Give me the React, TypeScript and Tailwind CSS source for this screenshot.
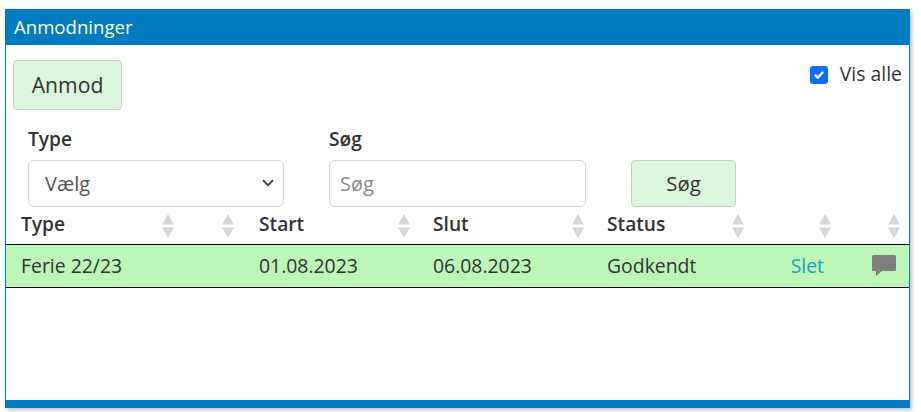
import { ChevronDown } from "lucide-react";

const headers = [
  { label: "Type", arrows: "right-[9px]" },
  { label: "", arrows: "right-[9px]" },
  { label: "Start", arrows: "right-[7px]" },
  { label: "Slut", arrows: "right-[7px]" },
  { label: "Status", arrows: "right-[8px]" },
  { label: "", arrows: "right-[9px]" },
  { label: "", arrows: "right-[9px]" },
];
const grid = "grid grid-cols-[178px_60px_174px_174px_161px_88px_69px]";

function SortArrows({ className }: { className: string }) {
  return (
    <svg className={`absolute top-[1px] ${className}`} width="14" height="24" viewBox="0 0 14 24" fill="#d6d6d6">
      <path d="M7 0 L13 10.5 L1 10.5 Z" />
      <path d="M1 13.5 L13 13.5 L7 24 Z" />
    </svg>
  );
}

export default function App() {
  return (
    <div className="h-[412px] w-[921px] bg-white pl-[5px] pt-[9px] font-['Open_Sans',sans-serif] text-[#333]">
      <div className="flex h-[399px] w-[905px] flex-col border-x border-b-[8px] border-x-[#007bc0] border-b-[#007bc0] shadow-[2px_2px_4px_rgba(0,0,0,0.25)]">
        <div className="flex h-[36px] items-center bg-[#007bc0] pl-2 text-[18.6px] text-white">Anmodninger</div>

        <div className="flex items-start justify-between pl-[7px] pr-[7px] pt-[15px]">
          <button className="h-[50px] w-[109px] rounded border border-[#ccc] bg-[#dcf8dc] text-[21.2px] text-[#333]">Anmod</button>
          <label className="flex items-center gap-[12px] text-[19.4px] leading-[27px]">
            <span className="mt-[3px] flex h-[18px] w-[18px] items-center justify-center rounded-[3px] bg-[#0d6efd]">
              <svg width="14" height="14" viewBox="0 0 20 20" fill="none" stroke="#fff" strokeWidth="3.4" strokeLinecap="round" strokeLinejoin="round">
                <path d="M5 10.5 L8.5 14 L15 6.5" />
              </svg>
            </span>
            Vis alle
          </label>
        </div>

        <div className="flex items-end pl-[22px] pt-[13px]">
          <div className="w-[256px]">
            <div className="mb-[6px] mt-[1px] text-[19.2px] font-semibold leading-[30px]">Type</div>
            <div className="relative flex h-[47px] items-center rounded-md border border-[#ced4da] pl-[16px] text-[20px] text-[#555]">
              Vælg
              <ChevronDown className="absolute right-[6px] top-[13px] text-[#444]" size={18} strokeWidth={2.4} />
            </div>
          </div>
          <div className="ml-[45px] w-[257px]">
            <div className="mb-[6px] mt-[1px] text-[19.2px] font-semibold leading-[30px]">Søg</div>
            <div className="flex h-[47px] items-center rounded-md border border-[#ced4da] pl-[10px] text-[20px] text-[#8a8a8a]">Søg</div>
          </div>
          <button className="ml-[45px] h-[47px] w-[105px] rounded border border-[#ccc] bg-[#dcf8dc] text-[20.4px] text-[#333]">Søg</button>
        </div>

        <div className={`${grid} mt-[2px] h-[36px] items-center border-b border-black`}>
          {headers.map((h, i) => (
            <div key={i} className="relative h-[28px] pl-[15px] text-[19.2px] font-semibold leading-[22px]">
              {h.label}
              <SortArrows className={h.arrows} />
            </div>
          ))}
        </div>

        <div className={`${grid} h-[43px] items-center border-b border-black bg-[#bbf7b7] text-[19.4px]`}>
          <div className="pl-[15px]">Ferie 22/23</div>
          <div />
          <div className="pl-[15px]">01.08.2023</div>
          <div className="pl-[15px]">06.08.2023</div>
          <div className="pl-[15px]">Godkendt</div>
          <div className="pr-[17px] text-right text-[#17a2b8]">Slet</div>
          <div className="flex justify-end pr-[14px]">
            <svg width="24" height="22" viewBox="0 0 24 22" fill="#7f7f7f">
              <path d="M1.5 0 H22.5 A1.5 1.5 0 0 1 24 1.5 V14.5 A1.5 1.5 0 0 1 22.5 16 H10 L4 21 V16 H1.5 A1.5 1.5 0 0 1 0 14.5 V1.5 A1.5 1.5 0 0 1 1.5 0 Z" />
            </svg>
          </div>
        </div>
      </div>
    </div>
  );
}
